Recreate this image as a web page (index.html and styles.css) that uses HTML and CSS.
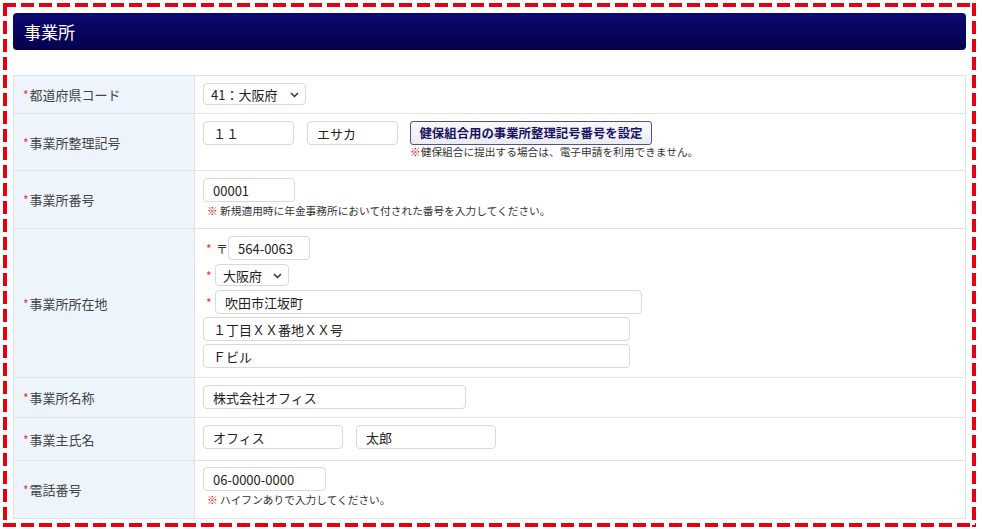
FILE: index.html
```html
<!DOCTYPE html>
<html lang="ja">
<head>
  <meta charset="UTF-8">
  <meta name="viewport" content="width=device-width, initial-scale=1.0">
  <title>事業所</title>
  <link rel="stylesheet" href="styles.css">
</head>
<body>
  <div class="frame">
    <div class="panel-header">事業所</div>

    <div class="form-table">
      <!-- 都道府県コード -->
      <div class="form-row h-37">
        <div class="form-label"><span class="req">*</span>都道府県コード</div>
        <div class="form-value">
          <span class="select-wrap w-103">
            <select class="select"><option>41：大阪府</option></select>
            <svg class="chevron" width="9" height="6" viewBox="0 0 9 6"><path d="M1 1l3.5 3.5L8 1" fill="none" stroke="#333" stroke-width="1.5"/></svg>
          </span>
        </div>
      </div>

      <!-- 事業所整理記号 -->
      <div class="form-row h-57">
        <div class="form-label"><span class="req">*</span>事業所整理記号</div>
        <div class="form-value inline-fields">
          <input class="input w-91" type="text" value="１１">
          <input class="input w-91" type="text" value="エサカ">
          <div class="btn-block">
            <button class="btn-setting">健保組合用の事業所整理記号番号を設定</button>
            <p class="note note-tight"><span class="mark">※</span>健保組合に提出する場合は、電子申請を利用できません。</p>
          </div>
        </div>
      </div>

      <!-- 事業所番号 -->
      <div class="form-row h-58">
        <div class="form-label"><span class="req">*</span>事業所番号</div>
        <div class="form-value">
          <input class="input w-92" type="text" value="00001">
          <p class="note"><span class="mark">※</span> 新規適用時に年金事務所において付された番号を入力してください。</p>
        </div>
      </div>

      <!-- 事業所所在地 -->
      <div class="form-row h-149">
        <div class="form-label"><span class="req">*</span>事業所所在地</div>
        <div class="form-value address">
          <div class="address-line">
            <span class="req-mark">*</span><span class="postal">〒</span>
            <input class="input w-82" type="text" value="564-0063">
          </div>
          <div class="address-line">
            <span class="req-mark">*</span>
            <span class="select-wrap w-74">
              <select class="select"><option>大阪府</option></select>
              <svg class="chevron" width="9" height="6" viewBox="0 0 9 6"><path d="M1 1l3.5 3.5L8 1" fill="none" stroke="#333" stroke-width="1.5"/></svg>
            </span>
          </div>
          <div class="address-line">
            <span class="req-mark">*</span>
            <input class="input w-427" type="text" value="吹田市江坂町">
          </div>
          <div class="address-line">
            <input class="input w-427" type="text" value="１丁目ＸＸ番地ＸＸ号">
          </div>
          <div class="address-line">
            <input class="input w-427" type="text" value="Ｆビル">
          </div>
        </div>
      </div>

      <!-- 事業所名称 -->
      <div class="form-row h-40">
        <div class="form-label"><span class="req">*</span>事業所名称</div>
        <div class="form-value">
          <input class="input w-263" type="text" value="株式会社オフィス">
        </div>
      </div>

      <!-- 事業主氏名 -->
      <div class="form-row h-43">
        <div class="form-label"><span class="req">*</span>事業主氏名</div>
        <div class="form-value inline-fields">
          <input class="input w-140" type="text" value="オフィス">
          <input class="input w-140" type="text" value="太郎">
        </div>
      </div>

      <!-- 電話番号 -->
      <div class="form-row h-58">
        <div class="form-label"><span class="req">*</span>電話番号</div>
        <div class="form-value pt-6">
          <input class="input w-123" type="text" value="06-0000-0000">
          <p class="note"><span class="mark">※</span> ハイフンありで入力してください。</p>
        </div>
      </div>
    </div>
  </div>
</body>
</html>
```

FILE: styles.css
```css
/* Reset */
* {
  margin: 0;
  padding: 0;
  box-sizing: border-box;
}

body {
  font-family: "Noto Sans CJK JP", "Noto Sans", sans-serif;
  font-size: 13px;
  color: #333;
  background-color: #fff;
}

/* Red dashed outline around the whole block */
.frame {
  width: 973px;
  height: 524px;
  margin: 3px;
  padding: 10px;
  background:
    repeating-linear-gradient(90deg, #e60012 0 13px, transparent 13px 18px) top left / 100% 4px no-repeat,
    repeating-linear-gradient(90deg, #e60012 0 13px, transparent 13px 18px) bottom left / 100% 4px no-repeat,
    repeating-linear-gradient(180deg, #e60012 0 13px, transparent 13px 18px) top left / 4px 100% no-repeat,
    repeating-linear-gradient(180deg, #e60012 0 13px, transparent 13px 18px) top right / 4px 100% no-repeat;
}

.panel-header {
  height: 37px;
  display: flex;
  align-items: center;
  padding-left: 11px;
  border-radius: 4px;
  background: linear-gradient(#0c0870, #05004c);
  color: #fff;
  font-size: 17px;
}

/* Form table */
.form-table {
  margin-top: 25px;
  border: 1px solid #dfe2e6;
}

.form-row {
  display: grid;
  grid-template-columns: 181px 1fr;
  border-top: 1px solid #dfe2e6;
}

.form-row:first-child {
  border-top: none;
}

/* row heights, top border included */
.h-37 { min-height: 37px; }
.h-40 { min-height: 40px; }
.h-43 { min-height: 43px; }
.h-57 { min-height: 57px; }
.h-58 { min-height: 58px; }
.h-149 { min-height: 149px; }

.form-label {
  display: flex;
  align-items: center;
  padding-left: 9px;
  background-color: #edf4fc;
  border-right: 1px solid #dfe2e6;
  color: #444;
}

.req {
  color: #e53935;
  font-size: 12px;
  margin-right: 1px;
}

.form-value {
  padding: 7px 8px 8px;
}

.pt-6 {
  padding-top: 6px;
}

.inline-fields {
  display: flex;
  align-items: flex-start;
  gap: 13px;
}

/* Inputs */
.input,
.select {
  height: 24px;
  padding: 0 9px;
  border: 1px solid #d9d9d9;
  border-radius: 4px;
  background-color: #fff;
  font-family: inherit;
  font-size: 13px;
  color: #222;
  outline: none;
}

.w-82 { width: 82px; }
.w-91 { width: 91px; }
.w-92 { width: 92px; }
.w-123 { width: 123px; }
.w-140 { width: 140px; }
.w-263 { width: 263px; }
.w-427 { width: 427px; }

.select-wrap {
  position: relative;
  display: inline-block;
  height: 22px;
}

.select-wrap.w-103 { width: 103px; }
.select-wrap.w-74 { width: 74px; }

.select {
  width: 100%;
  height: 22px;
  padding: 0 7px;
  appearance: none;
  -webkit-appearance: none;
}

.chevron {
  position: absolute;
  right: 7px;
  top: 9px;
  pointer-events: none;
}

/* Setting button + its note */
.btn-block {
  margin-left: -1px;
}

.btn-setting {
  width: 242px;
  height: 24px;
  padding: 0;
  border: 1px solid #50508a;
  border-radius: 3px;
  background: linear-gradient(#f8f8fb, #ececf3);
  color: #1b1464;
  font-family: inherit;
  font-size: 12.4px;
  font-weight: bold;
  cursor: pointer;
}

.note {
  margin-top: 2px;
  font-size: 10.7px;
  line-height: 14px;
  color: #333;
  padding-left: 4px;
}

.note-tight {
  margin-top: 0;
  padding-left: 0;
}

.mark {
  color: #e60012;
}

/* Address block */
.address {
  display: flex;
  flex-direction: column;
  gap: 3px;
}

.address-line {
  display: flex;
  align-items: center;
  height: 24px;
}

.req-mark {
  width: 12px;
  padding-left: 3px;
  color: #e53935;
  font-size: 12px;
}

.postal {
  margin-left: 1px;
  width: 12px;
  font-size: 12px;
}
```
